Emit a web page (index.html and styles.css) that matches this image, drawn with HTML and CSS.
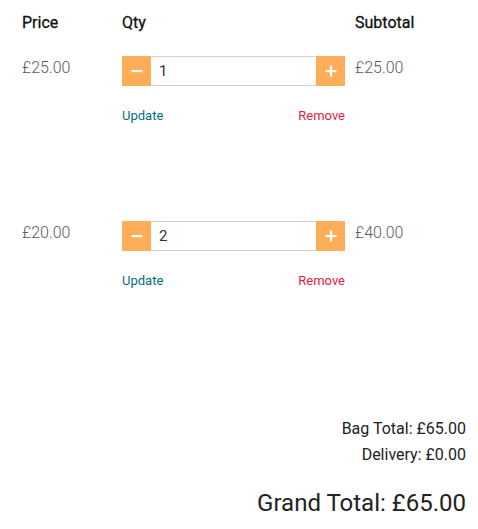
FILE: index.html
```html
<!DOCTYPE html>
<html lang="en">
<head>
<meta charset="utf-8">
<title>Bag</title>
<link rel="stylesheet" href="styles.css">
</head>
<body>
<div class="bag">
  <div class="row head">
    <div class="cell">Price</div>
    <div class="cell">Qty</div>
    <div class="cell">Subtotal</div>
  </div>
  <div class="row item">
    <div class="cell price">£25.00</div>
    <div class="cell">
      <div class="qty">
        <button class="step" aria-label="Decrease"><svg viewBox="0 0 12 12" width="12" height="12"><rect x="0.5" y="5" width="11" height="2.2" fill="#fff"/></svg></button>
        <input class="qty-input" type="text" value="1">
        <button class="step" aria-label="Increase"><svg viewBox="0 0 12 12" width="12" height="12"><rect x="0.5" y="5" width="11" height="2.2" fill="#fff"/><rect x="4.9" y="0.5" width="2.2" height="11" fill="#fff"/></svg></button>
      </div>
      <div class="links"><a class="update" href="#">Update</a><a class="remove" href="#">Remove</a></div>
    </div>
    <div class="cell price">£25.00</div>
  </div>
  <div class="row item">
    <div class="cell price">£20.00</div>
    <div class="cell">
      <div class="qty">
        <button class="step" aria-label="Decrease"><svg viewBox="0 0 12 12" width="12" height="12"><rect x="0.5" y="5" width="11" height="2.2" fill="#fff"/></svg></button>
        <input class="qty-input" type="text" value="2">
        <button class="step" aria-label="Increase"><svg viewBox="0 0 12 12" width="12" height="12"><rect x="0.5" y="5" width="11" height="2.2" fill="#fff"/><rect x="4.9" y="0.5" width="2.2" height="11" fill="#fff"/></svg></button>
      </div>
      <div class="links"><a class="update" href="#">Update</a><a class="remove" href="#">Remove</a></div>
    </div>
    <div class="cell price">£40.00</div>
  </div>
  <div class="totals">
    <p class="line">Bag Total: £65.00</p>
    <p class="line">Delivery: £0.00</p>
    <p class="grand">Grand Total: £65.00</p>
  </div>
</div>
</body>
</html>
```
FILE: styles.css
```css
* { box-sizing: border-box; }
html, body { margin: 0; padding: 0; background: #fff; }
body {
  font-family: Roboto, "Liberation Sans", sans-serif;
  color: #212529;
}
.bag { padding: 0 12px 0 22px; }
.row {
  display: grid;
  grid-template-columns: 90px 223px 1fr;
  column-gap: 10px;
}
.head {
  padding: 11px 0 12px; font-size: 16px; line-height: 24px; font-weight: 400;
  color: #111; -webkit-text-stroke: 0.3px #111;
}
.item { height: 165px; padding-top: 9px; align-content: start; }
.price { font-size: 16px; font-weight: 300; line-height: 24px; color: #5a5a5a; }
.qty { display: flex; height: 30px; }
.step {
  width: 29px; height: 30px; border: 0; padding: 0; margin: 0;
  background: #ffad58;
  display: flex; align-items: center; justify-content: center;
}
.qty-input {
  flex: 1; min-width: 0; height: 30px; margin: 0;
  border: 1px solid #ced4da; border-left: 0; border-right: 0;
  padding: 0 8px;
  font-family: Roboto, "Liberation Sans", sans-serif;
  font-size: 15px; color: #333; outline: none;
}
.links { display: flex; justify-content: space-between; margin-top: 21px; font-size: 13px; line-height: 17px; }
.links a { text-decoration: none; }
.update { color: #00707f; }
.remove { color: #e31b3f; }
.totals { text-align: right; padding-top: 40px; }
.line { margin: 0 0 2px; font-size: 16px; line-height: 24px; color: #222; }
.grand { margin: 20px 0 0; font-size: 24px; line-height: 32px; color: #222; }
```
